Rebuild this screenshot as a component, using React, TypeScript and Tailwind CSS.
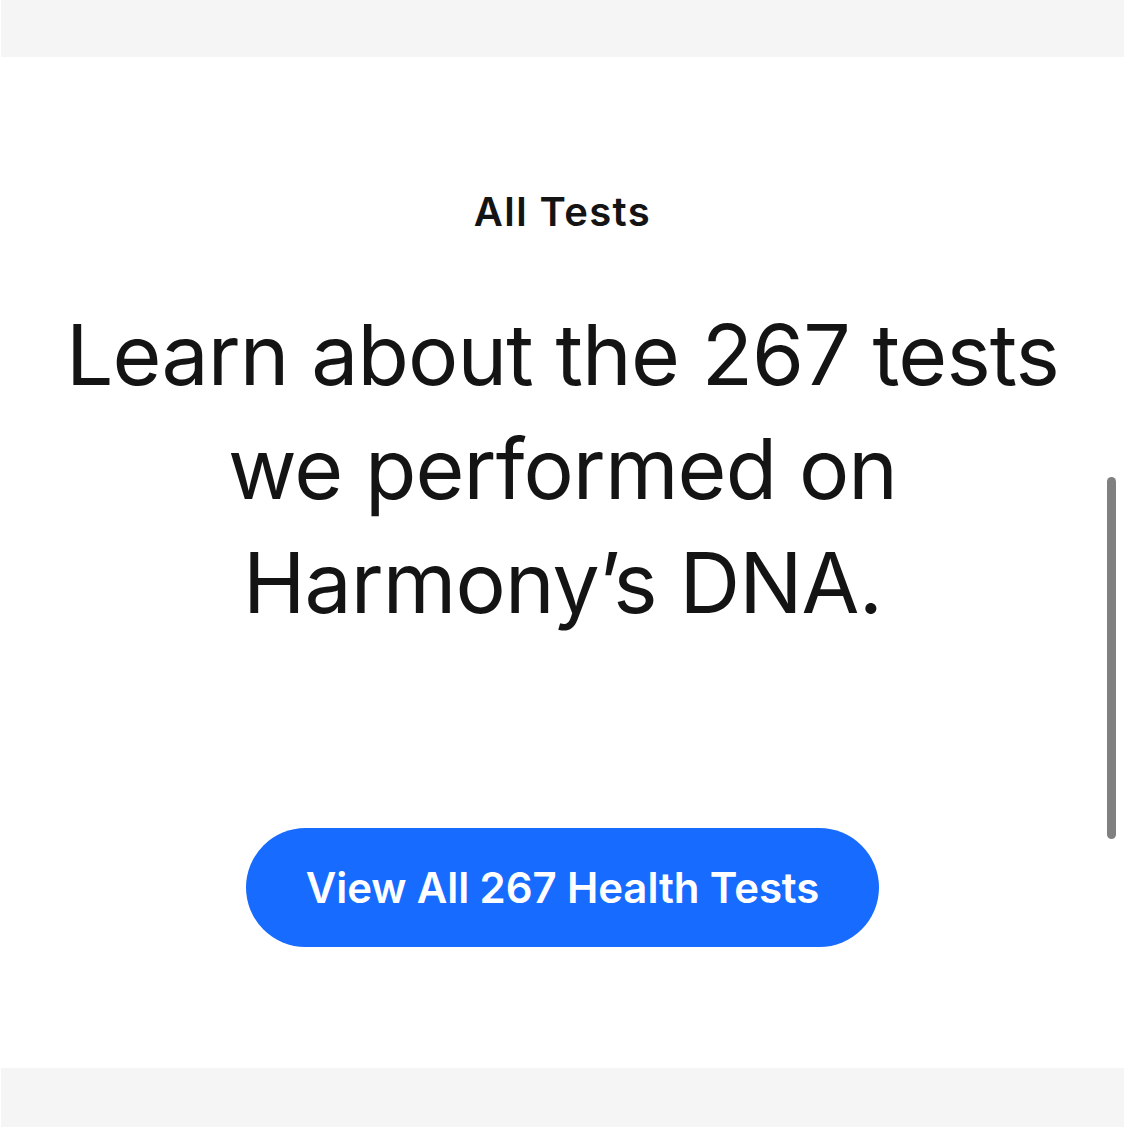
import React from "react";

export default function App() {
  return (
    <div className="relative w-[1125px] h-[1144px] bg-white overflow-hidden" style={{ fontFamily: "Inter, 'Liberation Sans', sans-serif" }}>
      <div className="h-[57px] bg-[#f5f5f5] mx-[1px]" />
      <div className="h-[1011px] bg-white flex flex-col items-center">
        <div className="mt-[131px] h-[48px] text-[40px] leading-[48px] font-semibold text-[#141414] tracking-[1.4px]">
          All Tests
        </div>
        <h1 className="mt-[62px] text-center text-[84px] leading-[114px] font-normal text-[#141414] tracking-[-0.9px]">
          Learn about the 267 tests
          <br />
          we performed on
          <br />
          Harmony’s DNA.
        </h1>
        <button className="mt-[188px] w-[633px] h-[119px] rounded-full bg-[#176bff] text-white text-[42px] font-semibold tracking-[-0.1px] flex items-center justify-center">
          View All 267 Health Tests
        </button>
      </div>
      <div className="h-[59px] bg-[#f5f5f5] mx-[1px]" />
      <div className="absolute left-[1107px] top-[477px] w-[9px] h-[362px] rounded-full bg-[#808080]" />
    </div>
  );
}
